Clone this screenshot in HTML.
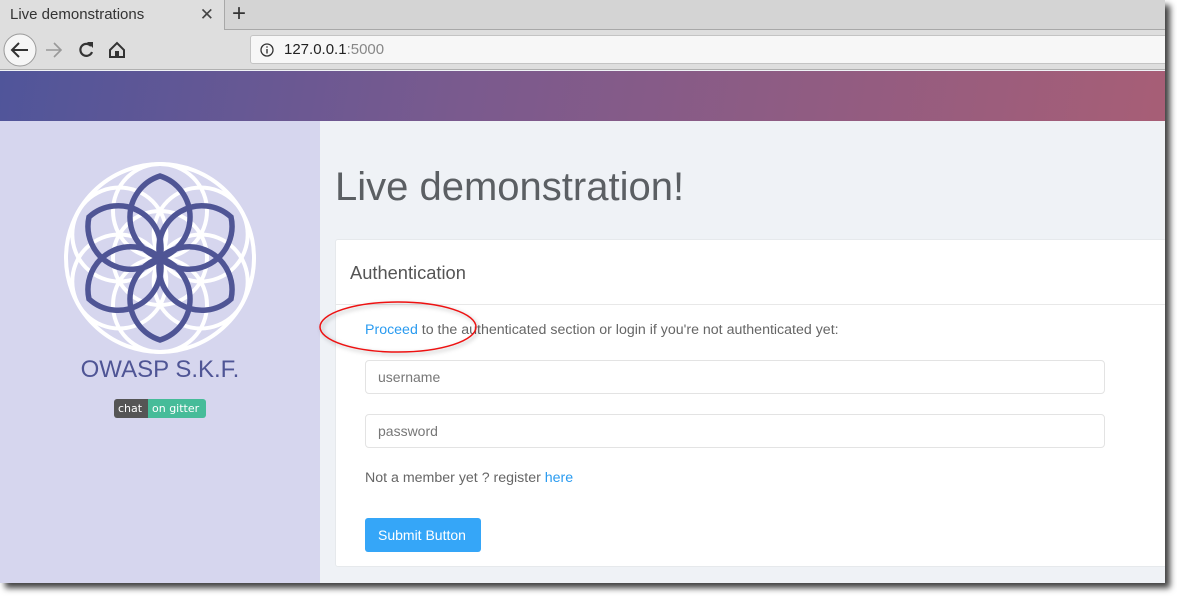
<!DOCTYPE html>
<html><head><meta charset="utf-8"><style>
*{margin:0;padding:0;box-sizing:border-box}
body{width:1177px;height:596px;background:#fff;font-family:"Liberation Sans",sans-serif;position:relative;overflow:hidden}
.win{position:absolute;left:0;top:0;width:1165px;height:583px;box-shadow:5px 5px 6px rgba(0,0,0,.75);overflow:hidden;background:#eff2f6}
.tabs{position:absolute;left:0;top:0;width:1165px;height:30px;background:#d4d4d4;border-bottom:1px solid #a8a8a8}
.tab{position:absolute;left:0;top:0;width:225px;height:30px;background:#dedede;border-right:1px solid #a8a8a8;font-size:15px;color:#333;padding:6px 10px}
.tab .x{position:absolute;right:10px;top:5px;font-size:17px;color:#444}
.plus{position:absolute;left:232px;top:0px;font-size:24px;color:#333}
.tool{position:absolute;left:0;top:30px;width:1165px;height:40px;background:#dedede;border-bottom:1px solid #b0b0b0}
.url{position:absolute;left:250px;top:5px;width:920px;height:29px;background:#f7f7f7;border:1px solid #c4c4c4;border-radius:3px;font-size:15px;color:#222;padding:5px 0 0 33px}
.hdr{position:absolute;left:0;top:71px;width:1165px;height:50px;background:linear-gradient(100deg,#50559a 0%,#7a5a8e 40%,#a75e76 100%)}
.side{position:absolute;left:0;top:121px;width:320px;height:462px;background:#d6d6ee}
h1{position:absolute;left:335px;top:165px;font-size:40px;font-weight:normal;color:#5b5f63}
.card{position:absolute;left:335px;top:239px;width:840px;height:328px;background:#fff;border:1px solid #e6e9ec;border-radius:3px}
.ch{height:65px;border-bottom:1px solid #e8e8e8;font-size:18.3px;color:#555;padding:22px 14px}
.t{position:absolute;left:29px;font-size:14.2px;color:#666}
a{color:#2a9bf0;text-decoration:none}
.in{position:absolute;left:29px;width:740px;height:34px;border:1px solid #e3e3e3;border-radius:4px;font-size:14px;color:#777;padding:8px 12px}
.btn{position:absolute;left:29px;top:278px;width:116px;height:34px;background:#35a6f8;border-radius:3px;color:#fff;font-size:14px;padding:9px 0 0 13px}
</style></head><body>
<div class="win">
<div class="tabs"><div class="tab">Live demonstrations<span class="x">✕</span></div><div class="plus">+</div></div>
<div class="tool">
<svg style="position:absolute;left:0;top:0" width="140" height="40">
<circle cx="20" cy="20" r="16" fill="#f6f6f6" stroke="#9a9a9a"/>
<path d="M28 20H13M19 13l-7 7 7 7" stroke="#333" stroke-width="2" fill="none"/>
<path d="M46 20h14M54 13l7 7-7 7" stroke="#999" stroke-width="1.6" fill="none"/>
<path d="M91 16a6 6 0 1 0 1 6" stroke="#333" stroke-width="2.2" fill="none"/><path d="M87 12h6v6z" fill="#333"/>
<path d="M110 20l7-7 7 7v7h-14z" stroke="#333" stroke-width="2" fill="none"/><rect x="115" y="21" width="4" height="6" fill="#333"/>
</svg>
<div class="url"><svg style="position:absolute;left:9px;top:7px" width="14" height="14"><circle cx="7" cy="7" r="6" fill="none" stroke="#333" stroke-width="1.3"/><rect x="6.3" y="6" width="1.4" height="4.5" fill="#333"/><rect x="6.3" y="3.3" width="1.4" height="1.4" fill="#333"/></svg>127.0.0.1<span style="color:#888">:5000</span></div>
</div>
<div class="hdr"></div>
<div class="side">
<svg style="position:absolute;left:0;top:0" width="320" height="320">
<g fill="none" stroke="#fff" stroke-width="4">
<circle cx="160" cy="137" r="94"/>
<circle cx="160" cy="137" r="47"/>
<circle cx="160" cy="90" r="47"/><circle cx="160" cy="184" r="47"/>
<circle cx="119.3" cy="113.5" r="47"/><circle cx="200.7" cy="113.5" r="47"/>
<circle cx="119.3" cy="160.5" r="47"/><circle cx="200.7" cy="160.5" r="47"/>
</g>
<g fill="none" stroke="#4f5595" stroke-width="5.5">
<path d="M160 137A43 43 0 0 1 160 55A43 43 0 0 1 160 137z"/>
<path d="M160 137A43 43 0 0 1 160 55A43 43 0 0 1 160 137z" transform="rotate(60 160 137)"/>
<path d="M160 137A43 43 0 0 1 160 55A43 43 0 0 1 160 137z" transform="rotate(120 160 137)"/>
<path d="M160 137A43 43 0 0 1 160 55A43 43 0 0 1 160 137z" transform="rotate(180 160 137)"/>
<path d="M160 137A43 43 0 0 1 160 55A43 43 0 0 1 160 137z" transform="rotate(240 160 137)"/>
<path d="M160 137A43 43 0 0 1 160 55A43 43 0 0 1 160 137z" transform="rotate(300 160 137)"/>
</g>
</svg>
<div style="position:absolute;left:0;width:320px;top:235px;text-align:center;font-size:24px;color:#4f5595">OWASP S.K.F.</div>
<div style="position:absolute;left:114px;top:278px;height:19px;width:92px;border-radius:3px;overflow:hidden;font-family:'DejaVu Sans',sans-serif;font-size:11px;color:#fff;display:flex">
<span style="background:#555;width:34px;padding:3px 0 0 4px">chat</span><span style="background:#46bc99;flex:1;padding:3px 0 0 4px">on gitter</span></div>
</div>
<h1>Live demonstration!</h1>
<div class="card">
<div class="ch">Authentication</div>
<div class="t" style="top:82px"><a>Proceed</a> to the authenticated section or login if you're not authenticated yet:</div>
<div class="in" style="top:120px">username</div>
<div class="in" style="top:174px">password</div>
<div class="t" style="top:230px">Not a member yet ? register <a>here</a></div>
<div class="btn">Submit Button</div>
</div>
<svg style="position:absolute;left:315px;top:295px" width="170" height="65"><ellipse cx="83" cy="32" rx="78" ry="25" fill="none" stroke="#e11" stroke-width="1.5" style="filter:drop-shadow(2px 2px 2px rgba(0,0,0,.3))"/></svg>
</div>
</body></html>
